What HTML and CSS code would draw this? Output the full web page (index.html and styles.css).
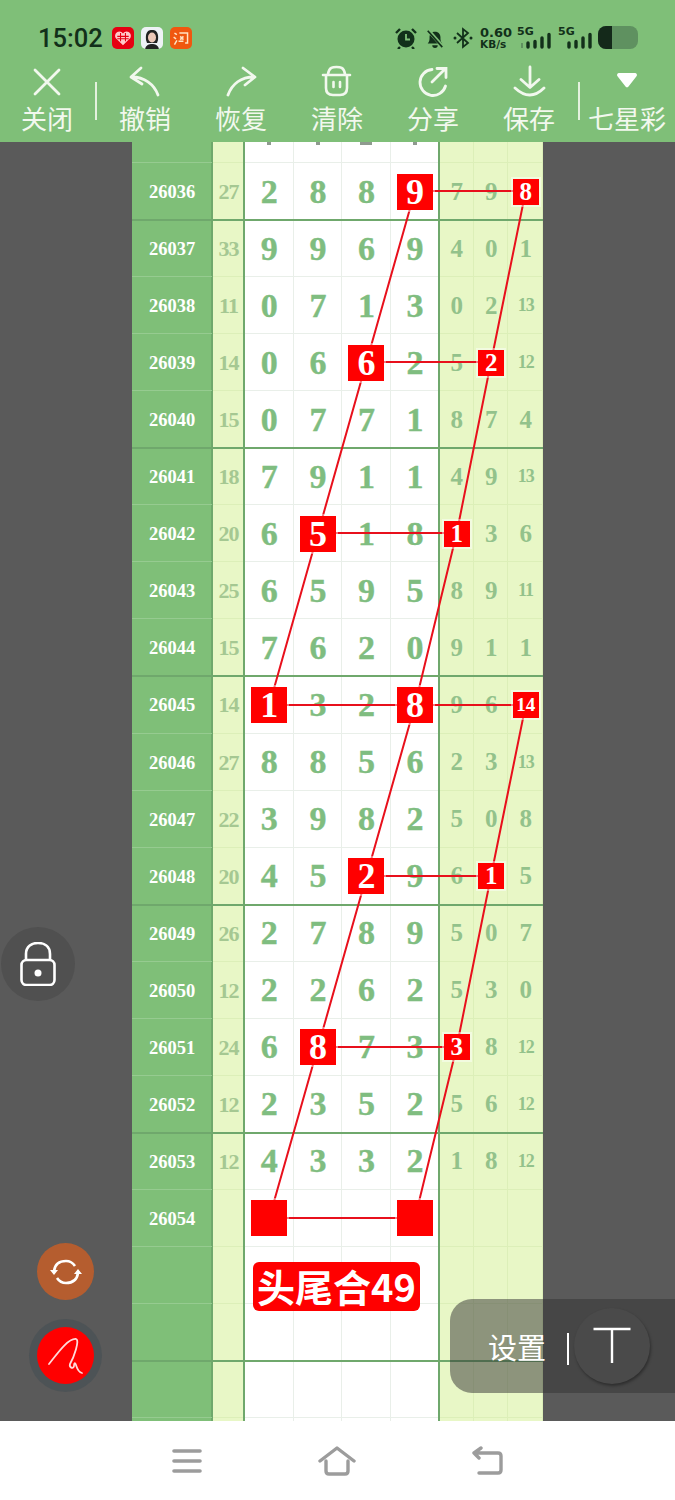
FILE: index.html
```html
<!DOCTYPE html>
<html lang="zh">
<head>
  <meta charset="UTF-8">
  <meta name="viewport" content="width=device-width, initial-scale=1">
  <title>七星彩</title>
  <link rel="stylesheet" href="styles.css">
</head>
<body>
  <header class="top">
    <div class="status">
      <span class="time">15:02</span>
      <div class="apps">
        <span class="app app-red">
          <svg viewBox="0 0 22 22" width="18" height="18"><path d="M11 20 2 11C0 7 3 3 6.500 3 8.500 3 10 4 11 5.500 12 4 13.500 3 15.500 3 19 3 22 7 20 11Z" fill="#ffc9c9"/><path d="M4 9h14M4 12h14M8 5v10M14 5v10" stroke="#e60012" stroke-width="1.300"/></svg>
        </span>
        <span class="app app-face">
          <svg viewBox="0 0 22 22" width="22" height="22"><path d="M5 13C4 4 8 3 11 3s7 1 6 10l-1 3H6Z" fill="#222"/><ellipse cx="11" cy="10.500" rx="4" ry="5" fill="#edc8b8"/><path d="M4 22c1-4 4-5 7-5s6 1 7 5Z" fill="#222"/></svg>
        </span>
        <span class="app app-orange">
          <svg viewBox="0 0 22 22" width="18" height="18"><path d="M3 5l3 2M2 10l3 2M3 19l3-5M9 5h10v12h-3M10 9l4 4M14 9l-4 4M8 15h6" fill="none" stroke="#ffe3c4" stroke-width="1.800"/></svg>
        </span>
      </div>
      <div class="indicators">
        <svg viewBox="0 0 22 22" width="22" height="22"><circle cx="11" cy="12" r="8.500" fill="#12301a"/><path d="M11 7v5.500h4" fill="none" stroke="#7fbf78" stroke-width="1.800"/><path d="M1 6l4-4M21 6l-4-4M5 20l-2 2M17 20l2 2" stroke="#12301a" stroke-width="2.400"/></svg>
        <svg viewBox="0 0 22 22" width="20" height="22"><path d="M3 17c2-2 2-4 2-7 0-4 3-6 6-6s6 2 6 6c0 3 0 5 2 7Z" fill="#12301a"/><path d="M8 19a3 3 0 0 0 6 0Z" fill="#12301a"/><path d="M3 2l17 19" stroke="#7fbf78" stroke-width="4"/><path d="M3 3l16 18" stroke="#12301a" stroke-width="1.800"/></svg>
        <svg viewBox="0 0 20 22" width="20" height="22"><path d="M4 6l11 10-5 4V2l5 4L4 16" fill="none" stroke="#12301a" stroke-width="1.800"/><circle cx="2" cy="11" r="1.500" fill="#12301a"/><circle cx="18" cy="11" r="1.500" fill="#12301a"/></svg>
        <div class="speed"><b>0.60</b><small>KB/s</small></div>
        <div class="signal signal-one">
          <span class="tag">5G</span>
          <svg viewBox="0 0 36 22" width="36" height="22"><path d="M5 16v5" stroke="#5f9160" stroke-width="2"/><path d="M11 16v4M18 14.500v5.500M25 11v9M32 7.500v12.500" stroke="#12301a" stroke-width="3.400" stroke-linecap="round"/></svg>
        </div>
        <div class="signal signal-two">
          <span class="tag">5G</span>
          <svg viewBox="0 0 36 22" width="36" height="22"><path d="M11 16v4M18 14.500v5.500M25 11v9M32 7.500v12.500" stroke="#12301a" stroke-width="3.400" stroke-linecap="round"/></svg>
        </div>
        <div class="battery"><span class="level"></span></div>
      </div>
    </div>
    <nav class="tools">
      <div class="tool tool-edge">
        <svg viewBox="0 0 36 36" width="36" height="36"><path d="M6 6l24 24M30 6 6 30" fill="none" stroke="#f2f8ee" stroke-width="2.800" stroke-linecap="round"/></svg>
        <span>关闭</span>
      </div>
      <i class="sep"></i>
      <div class="tool">
        <svg viewBox="0 0 36 36" width="36" height="36"><path d="M14 4 4 13l11 7M5 13c12 0 22 7 26 18" fill="none" stroke="#f2f8ee" stroke-width="2.800" stroke-linecap="round" stroke-linejoin="round"/></svg>
        <span>撤销</span>
      </div>
      <div class="tool">
        <svg viewBox="0 0 36 36" width="36" height="36"><path d="M20 4l12 9-10 8M31 13C18 13 9 20 5 31" fill="none" stroke="#f2f8ee" stroke-width="2.800" stroke-linecap="round" stroke-linejoin="round"/></svg>
        <span>恢复</span>
      </div>
      <div class="tool">
        <svg viewBox="0 0 36 36" width="36" height="36"><path d="M9 10C10 3 14 3 17.500 3 21 3 25 3 26 10M4 11H31M7 11V24c0 5 3 7 7 7h7c4 0 7-2 7-7V11M14.500 18v5M21 18v5" fill="none" stroke="#f2f8ee" stroke-width="2.600" stroke-linecap="round"/></svg>
        <span>清除</span>
      </div>
      <div class="tool">
        <svg viewBox="0 0 36 36" width="36" height="36"><path d="M17 5.500A13 13 0 1 0 30.500 22M17 18 30 5M22 4.500h9v9" fill="none" stroke="#f2f8ee" stroke-width="2.800" stroke-linecap="round"/></svg>
        <span>分享</span>
      </div>
      <div class="tool">
        <svg viewBox="0 0 36 36" width="36" height="36"><path d="M19 3v20M10 15.500l9 8 9-8M4 24Q19 38 33 24" fill="none" stroke="#f2f8ee" stroke-width="2.800" stroke-linecap="round" stroke-linejoin="round"/></svg>
        <span>保存</span>
      </div>
      <i class="sep"></i>
      <div class="tool tool-edge">
        <svg viewBox="0 0 36 36" width="36" height="36"><path d="M10 9h16a2 2 0 0 1 1.500 3.300L19.500 22.500a2 2 0 0 1-3 0L8.500 12.300A2 2 0 0 1 10 9Z" fill="#fff"/></svg>
        <span>七星彩</span>
      </div>
    </nav>
  </header>

  <main class="stage">
    <section class="board">
      <div class="row"><b class="id"></b><b class="sum"></b><b class="n"><i class="tick"></i></b><b class="n"><i class="tick"></i></b><b class="n"><i class="tick wide"></i></b><b class="n"><i class="tick"></i></b><b class="t"></b><b class="t"></b><b class="t"></b></div>
      <div class="row end"><b class="id">26036</b><b class="sum">27</b><b class="n">2</b><b class="n">8</b><b class="n">8</b><b class="n"><em class="hit">9</em></b><b class="t">7</b><b class="t">9</b><b class="t"><em class="hit sm">8</em></b></div>
      <div class="row"><b class="id">26037</b><b class="sum">33</b><b class="n">9</b><b class="n">9</b><b class="n">6</b><b class="n">9</b><b class="t">4</b><b class="t">0</b><b class="t">1</b></div>
      <div class="row"><b class="id">26038</b><b class="sum">11</b><b class="n">0</b><b class="n">7</b><b class="n">1</b><b class="n">3</b><b class="t">0</b><b class="t">2</b><b class="t tt">13</b></div>
      <div class="row"><b class="id">26039</b><b class="sum">14</b><b class="n">0</b><b class="n">6</b><b class="n"><em class="hit">6</em></b><b class="n">2</b><b class="t">5</b><b class="t"><em class="hit sm">2</em></b><b class="t tt">12</b></div>
      <div class="row end"><b class="id">26040</b><b class="sum">15</b><b class="n">0</b><b class="n">7</b><b class="n">7</b><b class="n">1</b><b class="t">8</b><b class="t">7</b><b class="t">4</b></div>
      <div class="row"><b class="id">26041</b><b class="sum">18</b><b class="n">7</b><b class="n">9</b><b class="n">1</b><b class="n">1</b><b class="t">4</b><b class="t">9</b><b class="t tt">13</b></div>
      <div class="row"><b class="id">26042</b><b class="sum">20</b><b class="n">6</b><b class="n"><em class="hit">5</em></b><b class="n">1</b><b class="n">8</b><b class="t"><em class="hit sm">1</em></b><b class="t">3</b><b class="t">6</b></div>
      <div class="row"><b class="id">26043</b><b class="sum">25</b><b class="n">6</b><b class="n">5</b><b class="n">9</b><b class="n">5</b><b class="t">8</b><b class="t">9</b><b class="t tt">11</b></div>
      <div class="row end"><b class="id">26044</b><b class="sum">15</b><b class="n">7</b><b class="n">6</b><b class="n">2</b><b class="n">0</b><b class="t">9</b><b class="t">1</b><b class="t">1</b></div>
      <div class="row"><b class="id">26045</b><b class="sum">14</b><b class="n"><em class="hit">1</em></b><b class="n">3</b><b class="n">2</b><b class="n"><em class="hit">8</em></b><b class="t">9</b><b class="t">6</b><b class="t"><em class="hit sm two">14</em></b></div>
      <div class="row"><b class="id">26046</b><b class="sum">27</b><b class="n">8</b><b class="n">8</b><b class="n">5</b><b class="n">6</b><b class="t">2</b><b class="t">3</b><b class="t tt">13</b></div>
      <div class="row"><b class="id">26047</b><b class="sum">22</b><b class="n">3</b><b class="n">9</b><b class="n">8</b><b class="n">2</b><b class="t">5</b><b class="t">0</b><b class="t">8</b></div>
      <div class="row end"><b class="id">26048</b><b class="sum">20</b><b class="n">4</b><b class="n">5</b><b class="n"><em class="hit">2</em></b><b class="n">9</b><b class="t">6</b><b class="t"><em class="hit sm">1</em></b><b class="t">5</b></div>
      <div class="row"><b class="id">26049</b><b class="sum">26</b><b class="n">2</b><b class="n">7</b><b class="n">8</b><b class="n">9</b><b class="t">5</b><b class="t">0</b><b class="t">7</b></div>
      <div class="row"><b class="id">26050</b><b class="sum">12</b><b class="n">2</b><b class="n">2</b><b class="n">6</b><b class="n">2</b><b class="t">5</b><b class="t">3</b><b class="t">0</b></div>
      <div class="row"><b class="id">26051</b><b class="sum">24</b><b class="n">6</b><b class="n"><em class="hit">8</em></b><b class="n">7</b><b class="n">3</b><b class="t"><em class="hit sm">3</em></b><b class="t">8</b><b class="t tt">12</b></div>
      <div class="row end"><b class="id">26052</b><b class="sum">12</b><b class="n">2</b><b class="n">3</b><b class="n">5</b><b class="n">2</b><b class="t">5</b><b class="t">6</b><b class="t tt">12</b></div>
      <div class="row"><b class="id">26053</b><b class="sum">12</b><b class="n">4</b><b class="n">3</b><b class="n">3</b><b class="n">2</b><b class="t">1</b><b class="t">8</b><b class="t tt">12</b></div>
      <div class="row"><b class="id">26054</b><b class="sum"></b><b class="n"><em class="hit"></em></b><b class="n"></b><b class="n"></b><b class="n"><em class="hit"></em></b><b class="t"></b><b class="t"></b><b class="t"></b></div>
      <div class="row"><b class="id"></b><b class="sum"></b><b class="n"></b><b class="n"></b><b class="n"></b><b class="n"></b><b class="t"></b><b class="t"></b><b class="t"></b></div>
      <div class="row end"><b class="id"></b><b class="sum"></b><b class="n"></b><b class="n"></b><b class="n"></b><b class="n"></b><b class="t"></b><b class="t"></b><b class="t"></b></div>
      <div class="row"><b class="id"></b><b class="sum"></b><b class="n"></b><b class="n"></b><b class="n"></b><b class="n"></b><b class="t"></b><b class="t"></b><b class="t"></b></div>
      <div class="row"><b class="id"></b><b class="sum"></b><b class="n"></b><b class="n"></b><b class="n"></b><b class="n"></b><b class="t"></b><b class="t"></b><b class="t"></b></div>

      <svg class="lines" viewBox="0 0 411 1312" width="411" height="1312">
        <polyline points="283,85 234.500,256 186,427 137.300,599"/>
        <polyline points="283,599 234.500,770 186,941 137.300,1112"/>
        <polyline points="393.700,85 359,256 324.700,427 283,599"/>
        <polyline points="393.700,599 359,770 324.700,941 283,1112"/>
        <path d="M283 85H393.700M234.500 256H359M186 427H324.700M137.300 599H393.700M234.500 770H359M186 941H324.700M137.300 1112H283"/>
      </svg>
      <div class="slogan">头尾合49</div>
    </section>

    <div class="float lock">
      <svg viewBox="0 0 40 44" width="40" height="44"><path d="M8 18v-6C8 4 14 1 20 1s12 3 12 11v6" fill="none" stroke="#fff" stroke-width="2.600"/><rect x="3.500" y="18" width="33" height="25" rx="5" fill="none" stroke="#fff" stroke-width="2.600"/><circle cx="20" cy="31" r="3.500" fill="#fff"/></svg>
    </div>
    <div class="float sync">
      <svg viewBox="0 0 32 32" width="32" height="32"><path d="M4 15C5 8 10 5 16 5c4 0 7 2 9 5M28 17c-1 7-6 10-12 10-4 0-7-2-9-5" fill="none" stroke="#fff" stroke-width="2.600"/><path d="M0 14h8l-4 5ZM24 18h8l-4-5Z" fill="#fff"/></svg>
    </div>
    <div class="float pen">
      <svg viewBox="0 0 44 44" width="44" height="44"><path d="M5 30C13 20 24 4 32 5c4 1-2 18-6 25-1 3 3 6 4 2 0-3 1-4 2-1s2 7 6 8" fill="none" stroke="#ffd9d9" stroke-width="1.800" stroke-linecap="round"/></svg>
    </div>
    <div class="settings">
      <span class="settings-label">设置</span>
      <i class="settings-sep"></i>
      <div class="text-btn">
        <svg viewBox="0 0 40 40" width="40" height="40"><path d="M1.500 3h37M20 3v34" fill="none" stroke="#fff" stroke-width="2.400"/></svg>
      </div>
    </div>
  </main>

  <footer class="sysnav">
    <svg viewBox="0 0 32 28" width="32" height="28"><path d="M3 4h26M3 14h26M3 24h26" fill="none" stroke="#9c9c9c" stroke-width="3.600" stroke-linecap="round"/></svg>
    <svg viewBox="0 0 38 30" width="38" height="30"><path d="M2 15 19 2l17 13M8 15v10c0 2 1 3 3 3h16c2 0 3-1 3-3V15" fill="none" stroke="#9c9c9c" stroke-width="3.400" stroke-linecap="round" stroke-linejoin="round"/></svg>
    <svg viewBox="0 0 34 30" width="34" height="30"><path d="M3 7h24c2 0 3 1 3 3v14c0 2-1 3-3 3H8M10 2 3 7l5 5" fill="none" stroke="#9c9c9c" stroke-width="3.400" stroke-linecap="round" stroke-linejoin="round"/></svg>
  </footer>
</body>
</html>
```

FILE: styles.css
```css
* {
  box-sizing: border-box;
}
body {
  margin: 0;
  width: 675px;
  height: 1500px;
  display: flex;
  flex-direction: column;
  overflow: hidden;
  font-family: "Noto Sans CJK SC", "Noto Sans", sans-serif;
  background-color: #fff;
}

/* top bar */
.top {
  height: 142px;
  flex: none;
  background-color: #7fbf78;
  color: #f2f8ee;
}
.status {
  height: 60px;
  padding: 15px 0 0 38px;
  display: flex;
  align-items: center;
  color: #12301a;
}
.time {
  font-family: Roboto, "Noto Sans", sans-serif;
  font-size: 25.500px;
  font-weight: 500;
  width: 74px;
}
.apps {
  display: flex;
  gap: 7px;
}
.app {
  width: 22px;
  height: 22px;
  border-radius: 5px;
  display: flex;
  align-items: center;
  justify-content: center;
  overflow: hidden;
}
.app-red {
  background-color: #e60012;
}
.app-face {
  background-color: #eef2f6;
}
.app-orange {
  background-color: #f0570f;
}
.indicators {
  margin-left: 203px;
  display: flex;
  align-items: center;
  gap: 8px;
}
.speed {
  width: 30px;
  margin-left: -1px;
  display: flex;
  flex-direction: column;
  font-family: "DejaVu Sans", sans-serif;
  line-height: 11px;
}
.speed b {
  font-size: 13px;
  font-weight: 700;
  line-height: 13px;
}
.speed small {
  font-size: 10.500px;
  font-weight: 700;
}
.signal {
  width: 36px;
  position: relative;
}
.signal-one {
  margin-left: -1px;
}
.signal-two {
  margin-left: -3px;
}
.signal svg {
  display: block;
}
.tag {
  position: absolute;
  left: 0;
  top: -1px;
  font-family: "DejaVu Sans", sans-serif;
  font-size: 11px;
  line-height: 11px;
  font-weight: 700;
}
.battery {
  width: 40px;
  height: 23px;
  margin-left: -4px;
  border-radius: 8px;
  overflow: hidden;
  background-color: #5f9160;
}
.level {
  display: block;
  width: 14px;
  height: 23px;
  background-color: #14291a;
}

.tools {
  display: flex;
  height: 82px;
}
.tool {
  flex: 0 0 96px;
  display: flex;
  flex-direction: column;
  align-items: center;
}
.tool-edge {
  flex-basis: 94px;
}
.tool svg {
  margin-top: 4px;
}
.tool span {
  margin-top: -1px;
  font-size: 26px;
  line-height: 38px;
  white-space: nowrap;
}
.sep {
  flex: 0 0 2px;
  height: 38px;
  margin: 22px 0 0 1px;
  background-color: #e4f1de;
}

/* board */
.stage {
  flex: none;
  height: 1279px;
  position: relative;
  overflow: hidden;
  background-color: #5a5a5a;
}
.board {
  position: absolute;
  left: 132px;
  top: -36px;
  width: 411px;
}
.row {
  position: relative;
  display: grid;
  grid-template-columns: 80px 33px repeat(4, 48.600px) repeat(3, 34.500px);
  height: 57.050px;
}
.row b {
  display: flex;
  align-items: center;
  justify-content: center;
  font-family: "Liberation Serif", serif;
  font-weight: 700;
}
.row.end::after {
  content: "";
  position: absolute;
  z-index: 1;
  left: 0;
  right: 0;
  bottom: -1px;
  height: 2px;
  background-color: #6fa86c;
}
.row .id {
  padding-top: 2px;
  background-color: #7fbf78;
  color: #fff;
  font-size: 18.500px;
  box-shadow: inset 0 -1px #96cb90, inset -1px 0 #6fa86c;
}
.row .sum {
  padding-top: 1px;
  background-color: #e8f7c6;
  color: #a5c892;
  font-size: 22px;
  letter-spacing: -1px;
  box-shadow: inset -2px 0 #6fa86c, inset 1px 0 #6fa86c, inset 0 -1px #dcefb8;
}
.n {
  background-color: #fff;
  color: #7fbd80;
  font-size: 34px;
  -webkit-text-stroke: 0.4px #7fbd80;
  box-shadow: inset -1px -1px #e9efe9;
}
.row .n:nth-child(6) {
  box-shadow: inset -1px 0 #6fa86c, inset 0 -1px #e9efe9;
}
.t {
  background-color: #e8f7c6;
  color: #93c28b;
  font-size: 25px;
  box-shadow: inset -1px -1px #dcefb8;
}
.row .t:nth-child(7) {
  box-shadow: inset 1px 0 #6fa86c, inset -1px -1px #dcefb8;
}
.row .tt {
  font-size: 18px;
  letter-spacing: -1px;
}
.row .tick {
  align-self: flex-end;
  width: 4px;
  height: 3px;
  margin-bottom: 18px;
  background-color: #8f9a8f;
}
.row .tick.wide {
  width: 12px;
}
.hit {
  position: relative;
  z-index: 2;
  width: 36px;
  height: 36px;
  display: flex;
  align-items: center;
  justify-content: center;
  background-color: #f00;
  color: #fff;
  font-size: 36px;
  font-style: normal;
  letter-spacing: 0;
  -webkit-text-stroke: 0;
  box-shadow: 0 0 0 2px rgba(255, 255, 255, 0.45);
}
.hit.sm {
  width: 26px;
  height: 26px;
  font-size: 25px;
}
.hit.two {
  font-size: 19px;
}
.lines {
  position: absolute;
  left: 0;
  top: 0;
  z-index: 1;
}
.lines polyline,
.lines path {
  fill: none;
  stroke: #e8101c;
  stroke-width: 2;
}
.slogan {
  position: absolute;
  z-index: 2;
  left: 121px;
  top: 1156px;
  width: 167px;
  height: 49px;
  border-radius: 6px;
  background-color: #f00;
  color: #fff;
  font-size: 38px;
  font-weight: 700;
  line-height: 47px;
  text-align: center;
  white-space: nowrap;
}

/* floating buttons */
.float {
  position: absolute;
  z-index: 3;
  display: flex;
  align-items: center;
  justify-content: center;
  border-radius: 50%;
}
.lock {
  left: 1px;
  top: 785px;
  width: 74px;
  height: 74px;
  background-color: #505050;
}
.sync {
  left: 37px;
  top: 1101px;
  width: 57px;
  height: 57px;
  background-color: #b55d2f;
}
.pen {
  left: 37px;
  top: 1185px;
  width: 57px;
  height: 57px;
  background-color: #f00;
  box-shadow: 0 0 0 8px #4d5356;
}
.settings {
  position: absolute;
  z-index: 3;
  left: 450px;
  top: 1157px;
  width: 225px;
  height: 94px;
  padding-left: 38px;
  display: flex;
  align-items: center;
  border-radius: 22px 0 0 22px;
  background-color: rgba(50, 50, 50, 0.5);
  color: #fff;
}
.settings-label {
  font-size: 29px;
  line-height: 36px;
}
.settings-sep {
  width: 2px;
  height: 32px;
  margin: 6px 0 0 21px;
  background-color: #fff;
}
.text-btn {
  width: 76px;
  height: 76px;
  margin-left: 5px;
  border-radius: 50%;
  display: flex;
  align-items: center;
  justify-content: center;
  background-color: #4a4a4a;
  box-shadow: 1px 2px 3px rgba(0, 0, 0, 0.35);
}

/* system nav */
.sysnav {
  flex: 1;
  padding-left: 1px;
  display: flex;
  justify-content: center;
  align-items: center;
  gap: 115px;
  background-color: #fff;
}
```
